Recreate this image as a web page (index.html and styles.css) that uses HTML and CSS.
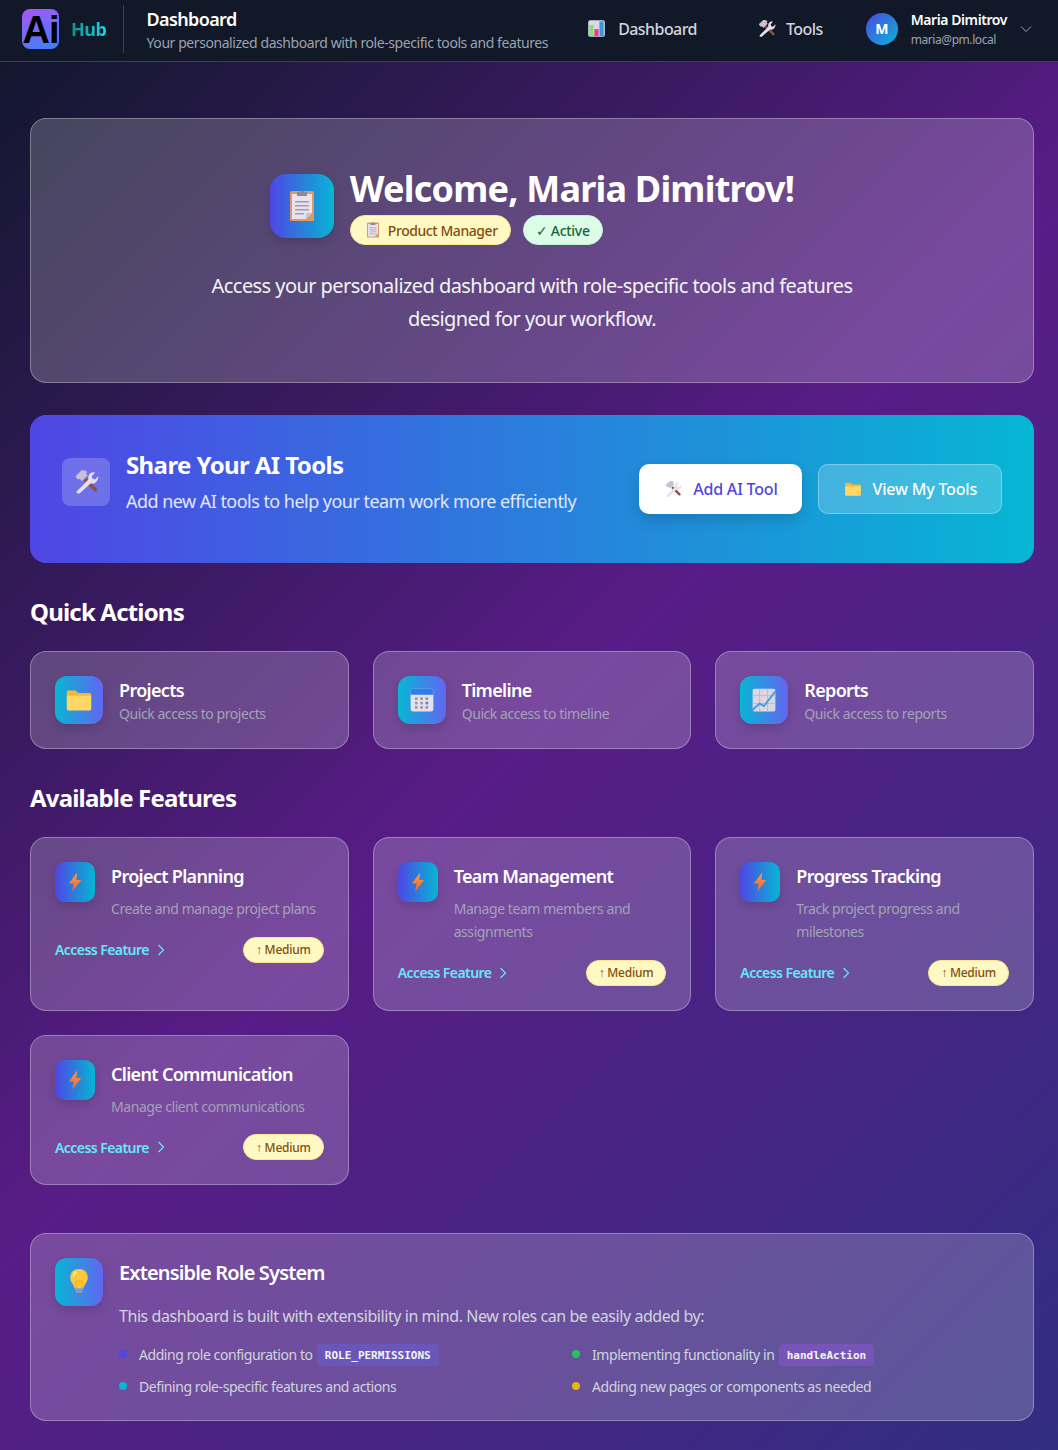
FILE: index.html
```html
<!DOCTYPE html>
<html lang="en">
<head>
  <meta charset="UTF-8" />
  <title>Dashboard</title>
  <link rel="stylesheet" href="styles.css">
</head>
<body>
  <svg class="defs" aria-hidden="true">
    <defs>
      <linearGradient id="bolt-g" x1="0" y1="0" x2="0" y2="1"><stop offset="0" stop-color="#f9a03f"/><stop offset="1" stop-color="#f2603c"/></linearGradient>
    </defs>
    <symbol id="i-tools" viewBox="0 0 32 32">
      <path d="M13 14l3-3 13 13c1 1 1 2 0 3s-2 1-3 0z" fill="#8d4f4a"/>
      <path d="M3 9l7-7c3-1 6 0 8 2l-2 1 2 3-7 7-3-3-2 1z" fill="#c9c0d3"/>
      <path d="M5 27l14-14c-1-4 1-8 5-9 1 0 2 0 3 .5L23 9l1 3 3 1 4-4c.5 4-2 8-6 9-1 0-2 0-3-.5L8 30c-2 1-5-1-3-3z" fill="#e6e0ec"/>
    </symbol>
    <symbol id="i-clip" viewBox="0 0 32 32">
      <rect x="4" y="1" width="24" height="30" rx="1.500" fill="#e09a5c"/>
      <path d="M6 4h20v19l-6 6H6z" fill="#e8e2ef"/>
      <path d="M20 29l6-6h-6z" fill="#c9c0d3"/>
      <path d="M9 11h14v1.400H9zM9 15h14v1.400H9zM9 19h14v1.400H9zM9 23h9v1.400H9z" fill="#a49cae"/>
      <path d="M11 2h3c0-2 4-2 4 0h3v4H11z" fill="#8f8896"/>
    </symbol>
    <symbol id="i-folder" viewBox="0 0 32 32">
      <path d="M2 7c0-1 1-2 2-2h8l3 3h13c1 0 2 1 2 2v4H2z" fill="#f7b733"/>
      <path d="M2 11h28v15c0 1-1 2-2 2H4c-1 0-2-1-2-2z" fill="#ffd766"/>
    </symbol>
    <symbol id="i-cal" viewBox="0 0 32 32">
      <rect x="3" y="3" width="26" height="26" rx="3" fill="#e6e0ec"/>
      <path d="M3 10V6c0-2 1-3 3-3h20c2 0 3 1 3 3v4z" fill="#2f7bf0"/>
      <g fill="#9a93a4">
        <rect x="8" y="13" width="3" height="3"/><rect x="14" y="13" width="3" height="3"/>
        <rect x="8" y="18" width="3" height="3"/><rect x="14" y="18" width="3" height="3"/><rect x="20" y="23" width="3" height="3"/>
        <rect x="8" y="23" width="3" height="3"/><rect x="14" y="23" width="3" height="3"/><rect x="20" y="13" width="3" height="3"/>
      </g>
      <rect x="20" y="18" width="3" height="3" fill="#2f8cf0"/>
    </symbol>
    <symbol id="i-chart" viewBox="0 0 32 32">
      <rect x="3" y="3" width="26" height="26" rx="2" fill="#ddd6e6"/>
      <path d="M11 3v26M20 3v26M3 11h26M3 20h26" stroke="#bdb5c8" fill="none"/>
      <path d="M2 28l9-8 5 3 13-17" stroke="#3d9be0" stroke-width="2" fill="none"/>
    </symbol>
    <symbol id="i-bars" viewBox="0 0 32 32">
      <rect x="2" y="2" width="28" height="28" rx="3" fill="#ddd6e6"/>
      <rect x="4" y="10" width="7" height="19" fill="#86e07a"/>
      <rect x="12.500" y="17" width="7" height="12" fill="#ee3c7c"/>
      <rect x="21" y="4" width="7" height="25" fill="#2f9ae0"/>
    </symbol>
    <symbol id="i-bolt" viewBox="0 0 32 32">
      <path d="M19 2L7 18h7l-2 12 13-17h-7z" fill="url(#bolt-g)"/>
    </symbol>
    <symbol id="i-bulb" viewBox="0 0 32 32">
      <path d="M16 1c6 0 10 4 10 10 0 5-4 7-5 12H11c-1-5-5-7-5-12C6 5 10 1 16 1z" fill="#fdc83a"/>
      <path d="M12 4c-2 1-3 4-3 6 1 1 2-3 5-5z" fill="#ffe89a"/>
      <path d="M13 23l-1-8h8l-1 8" fill="none" stroke="#f29e1f"/>
      <path d="M11 23h10v2H11zM12 26h8v2h-8z" fill="#a9a1b4"/>
      <path d="M13 29h6l-1 2h-4z" fill="#7f7789"/>
    </symbol>
  </svg>

  <header class="topbar">
    <div class="brand">
      <div class="logo">Ai</div>
      <span class="logo-hub">Hub</span>
      <div class="topbar-title">
        <h1>Dashboard</h1>
        <p>Your personalized dashboard with role-specific tools and features</p>
      </div>
    </div>
    <div class="topbar-right">
      <a class="nav-link nav-dash"><svg class="nav-icon"><use href="#i-bars"/></svg>Dashboard</a>
      <a class="nav-link nav-tools"><svg class="nav-icon"><use href="#i-tools"/></svg>Tools</a>
      <div class="user">
        <div class="avatar">M</div>
        <div class="user-info">
          <div class="user-name">Maria Dimitrov</div>
          <div class="user-mail">maria@pm.local</div>
        </div>
        <svg class="user-chevron" viewBox="0 0 12 12"><path d="M1 3.500l5 5 5-5" fill="none" stroke="currentColor" stroke-width="1"/></svg>
      </div>
    </div>
  </header>

  <main class="page">
    <section class="glass hero">
      <div class="hero-top">
        <div class="icon-box hero-icon"><svg><use href="#i-clip"/></svg></div>
        <div class="hero-head">
          <h2>Welcome, Maria Dimitrov!</h2>
          <div class="hero-badges">
            <span class="pill pill-yellow"><svg><use href="#i-clip"/></svg>Product Manager</span>
            <span class="pill pill-green">✓ Active</span>
          </div>
        </div>
      </div>
      <p class="hero-text">Access your personalized dashboard with role-specific tools and features designed for your workflow.</p>
    </section>

    <section class="share">
      <div class="share-left">
        <div class="share-icon"><svg><use href="#i-tools"/></svg></div>
        <div>
          <h3>Share Your AI Tools</h3>
          <p>Add new AI tools to help your team work more efficiently</p>
        </div>
      </div>
      <div class="share-btns">
        <a class="btn btn-white"><svg><use href="#i-tools"/></svg>Add AI Tool</a>
        <a class="btn btn-glass"><svg><use href="#i-folder"/></svg>View My Tools</a>
      </div>
    </section>

    <h2 class="section-title">Quick Actions</h2>
    <div class="grid">
      <div class="glass quick">
        <div class="icon-box alt"><svg><use href="#i-folder"/></svg></div>
        <div><h4>Projects</h4><p>Quick access to projects</p></div>
      </div>
      <div class="glass quick">
        <div class="icon-box alt"><svg><use href="#i-cal"/></svg></div>
        <div><h4>Timeline</h4><p>Quick access to timeline</p></div>
      </div>
      <div class="glass quick">
        <div class="icon-box alt"><svg><use href="#i-chart"/></svg></div>
        <div><h4>Reports</h4><p>Quick access to reports</p></div>
      </div>
    </div>

    <h2 class="section-title">Available Features</h2>
    <div class="grid">
      <div class="glass feature">
        <div class="feature-top">
          <div class="icon-box small"><svg><use href="#i-bolt"/></svg></div>
          <div><h4>Project Planning</h4><p>Create and manage project plans</p></div>
        </div>
        <div class="feature-foot">
          <a class="access">Access Feature <svg viewBox="0 0 12 12"><path d="M3.500 1l5 5-5 5" fill="none" stroke="currentColor" stroke-width="1.200"/></svg></a>
          <span class="pill pill-yellow pill-small">↑ Medium</span>
        </div>
      </div>
      <div class="glass feature">
        <div class="feature-top">
          <div class="icon-box small"><svg><use href="#i-bolt"/></svg></div>
          <div><h4>Team Management</h4><p>Manage team members and assignments</p></div>
        </div>
        <div class="feature-foot">
          <a class="access">Access Feature <svg viewBox="0 0 12 12"><path d="M3.500 1l5 5-5 5" fill="none" stroke="currentColor" stroke-width="1.200"/></svg></a>
          <span class="pill pill-yellow pill-small">↑ Medium</span>
        </div>
      </div>
      <div class="glass feature">
        <div class="feature-top">
          <div class="icon-box small"><svg><use href="#i-bolt"/></svg></div>
          <div><h4>Progress Tracking</h4><p>Track project progress and milestones</p></div>
        </div>
        <div class="feature-foot">
          <a class="access">Access Feature <svg viewBox="0 0 12 12"><path d="M3.500 1l5 5-5 5" fill="none" stroke="currentColor" stroke-width="1.200"/></svg></a>
          <span class="pill pill-yellow pill-small">↑ Medium</span>
        </div>
      </div>
      <div class="glass feature">
        <div class="feature-top">
          <div class="icon-box small"><svg><use href="#i-bolt"/></svg></div>
          <div><h4>Client Communication</h4><p>Manage client communications</p></div>
        </div>
        <div class="feature-foot">
          <a class="access">Access Feature <svg viewBox="0 0 12 12"><path d="M3.500 1l5 5-5 5" fill="none" stroke="currentColor" stroke-width="1.200"/></svg></a>
          <span class="pill pill-yellow pill-small">↑ Medium</span>
        </div>
      </div>
    </div>

    <section class="glass info">
      <div class="icon-box alt"><svg><use href="#i-bulb"/></svg></div>
      <div class="info-body">
        <h3>Extensible Role System</h3>
        <p>This dashboard is built with extensibility in mind. New roles can be easily added by:</p>
        <ul class="info-list">
          <li><span class="dot dot-indigo"></span>Adding role configuration to <code class="code-a">ROLE_PERMISSIONS</code></li>
          <li><span class="dot dot-green"></span>Implementing functionality in <code class="code-b">handleAction</code></li>
          <li><span class="dot dot-cyan"></span>Defining role-specific features and actions</li>
          <li><span class="dot dot-amber"></span>Adding new pages or components as needed</li>
        </ul>
      </div>
    </section>
  </main>
</body>
</html>
```

FILE: styles.css
```css
* {
  box-sizing: border-box;
}

body {
  margin: 0;
  min-height: 1450px;
  font-family: "Noto Sans", Roboto, sans-serif;
  letter-spacing: -0.027em;
  color: #fff;
  background: linear-gradient(135deg, #0f172a 0%, #581c87 50%, #312e81 100%);
}

h1, h2, h3, h4, p, ul {
  margin: 0;
  padding: 0;
}

.defs {
  position: absolute;
  width: 0;
  height: 0;
}

/* top bar */
.topbar {
  height: 62px;
  display: flex;
  justify-content: space-between;
  align-items: center;
  padding: 0 26px 4px 22px;
  background: #111827;
  border-bottom: 1px solid #374151;
}

.brand {
  display: flex;
  align-items: center;
}

.logo {
  width: 37px;
  height: 40px;
  border-radius: 8px;
  background: linear-gradient(160deg, #a855f7, #3b82f6);
  color: #000;
  font: 700 38px/42px "Liberation Sans", sans-serif;
  letter-spacing: -1px;
  text-align: center;
}

.logo-hub {
  margin-left: 12px;
  font-size: 18px;
  font-weight: 700;
  background: linear-gradient(90deg, #0d9488, #22d3ee);
  -webkit-background-clip: text;
  background-clip: text;
  color: transparent;
}

.topbar-title {
  margin-left: 16px;
  padding: 1px 0 0 23px;
  border-left: 1px solid #374151;
  height: 48px;
}

.topbar-title h1 {
  font-size: 18px;
  font-weight: 600;
  line-height: 27px;
  letter-spacing: -0.035em;
}

.topbar-title p {
  font-size: 14px;
  line-height: 20px;
  color: #9ca3af;
}

.topbar-right {
  display: flex;
  align-items: center;
}

.nav-link {
  display: flex;
  align-items: center;
  gap: 12px;
  font-size: 16px;
  font-weight: 500;
  letter-spacing: -0.035em;
  color: #d1d5db;
}

.nav-dash {
  margin-right: 60px;
}

.nav-tools {
  margin-right: 43px;
  gap: 10px;
}

.nav-icon {
  width: 19px;
  height: 19px;
}

.user {
  display: flex;
  align-items: center;
}

.avatar {
  width: 32px;
  height: 32px;
  border-radius: 50%;
  background: linear-gradient(135deg, #4f46e5, #06b6d4);
  text-align: center;
  font-size: 14px;
  font-weight: 700;
  line-height: 32px;
}

.user-info {
  margin: 0 13px;
  padding-top: 1px;
}

.user-name {
  font-size: 14px;
  font-weight: 600;
  line-height: 20px;
  letter-spacing: -0.03em;
}

.user-mail {
  margin-top: 2px;
  font-size: 12px;
  line-height: 16px;
  color: #9ca3af;
}

.user-chevron {
  width: 12px;
  height: 12px;
  color: #9ca3af;
}

/* page */
.page {
  padding: 56px 24px 29px 30px;
}

.glass {
  background: rgba(255, 255, 255, 0.2);
  border: 1px solid rgba(255, 255, 255, 0.3);
  border-radius: 16px;
}

.icon-box {
  flex: none;
  width: 48px;
  height: 48px;
  border-radius: 12px;
  display: flex;
  align-items: center;
  justify-content: center;
  background: linear-gradient(90deg, #4f46e5, #06b6d4);
  box-shadow: 0 4px 10px rgba(0, 0, 0, 0.15);
}

.icon-box svg {
  width: 28px;
  height: 28px;
}

.icon-box.alt {
  background: linear-gradient(90deg, #06b6d4, #6366f1);
}

.icon-box.small {
  width: 40px;
  height: 40px;
  border-radius: 10px;
}

.icon-box.small svg {
  width: 22px;
  height: 22px;
}

/* hero */
.hero {
  height: 265px;
  padding: 48px 47px;
  text-align: center;
}

.hero-top {
  display: flex;
  justify-content: center;
  align-items: center;
  gap: 16px;
  text-align: left;
}

.hero-icon {
  width: 64px;
  height: 64px;
  border-radius: 16px;
}

.hero-icon svg {
  width: 32px;
  height: 32px;
}

.hero-head h2 {
  font-size: 36px;
  font-weight: 700;
  line-height: 44px;
  letter-spacing: -0.022em;
}

.hero-badges {
  display: flex;
  gap: 12px;
  margin-top: 4px;
}

.pill {
  display: inline-flex;
  align-items: center;
  height: 30px;
  padding: 0 12px;
  border-radius: 15px;
  font-size: 14px;
  font-weight: 500;
}

.pill svg {
  width: 16px;
  height: 16px;
  margin: 0 7px 0 2px;
}

.pill-yellow {
  background: #fef9c3;
  border: 1px solid #fde68a;
  color: #854d0e;
}

.pill-green {
  background: #dcfce7;
  border: 1px solid #bbf7d0;
  color: #166534;
  letter-spacing: -0.02em;
}

.pill-small {
  height: 26px;
  border-radius: 13px;
  font-size: 12px;
  letter-spacing: -0.02em;
}

.hero-text {
  max-width: 672px;
  margin: 24px auto 0;
  font-size: 20px;
  line-height: 33px;
  letter-spacing: -0.028em;
  color: #f3f4f6;
}

/* share banner */
.share {
  height: 148px;
  margin-top: 32px;
  padding: 0 32px;
  display: flex;
  justify-content: space-between;
  align-items: center;
  border-radius: 16px;
  background: linear-gradient(90deg, #4f46e5, #06b6d4);
}

.share-left {
  display: flex;
  align-items: center;
  gap: 16px;
  margin-bottom: 14px;
}

.share-icon {
  width: 48px;
  height: 48px;
  border-radius: 8px;
  background: rgba(255, 255, 255, 0.2);
  display: flex;
  align-items: center;
  justify-content: center;
}

.share-icon svg {
  width: 26px;
  height: 26px;
}

.share h3 {
  font-size: 24px;
  font-weight: 700;
  line-height: 32px;
  letter-spacing: -0.025em;
}

.share p {
  margin-top: 6px;
  font-size: 18px;
  line-height: 28px;
  letter-spacing: -0.03em;
  color: #e0e7ff;
}

.share-btns {
  display: flex;
  gap: 16px;
}

.btn {
  height: 50px;
  padding: 0 24px 0 25px;
  display: flex;
  align-items: center;
  gap: 11px;
  border-radius: 10px;
  font-size: 16px;
  font-weight: 500;
  letter-spacing: -0.012em;
}

.btn svg {
  width: 18px;
  height: 18px;
}

.btn-white {
  background: #fff;
  color: #4f46e5;
  box-shadow: 0 6px 14px rgba(0, 0, 0, 0.15);
}

.btn-glass {
  background: rgba(255, 255, 255, 0.2);
  border: 1px solid rgba(255, 255, 255, 0.3);
}

/* sections */
.section-title {
  margin: 34px 0 24px;
  font-size: 24px;
  font-weight: 700;
  line-height: 30px;
  letter-spacing: -0.034em;
}

.grid {
  display: grid;
  grid-template-columns: repeat(3, 1fr);
  gap: 24px;
}

.quick {
  height: 98px;
  padding: 0 24px;
  display: flex;
  align-items: center;
  gap: 16px;
}

h4 {
  font-size: 18px;
  font-weight: 600;
  line-height: 28px;
  letter-spacing: -0.038em;
}

.quick p,
.feature p {
  font-size: 14px;
  color: #a3a3b5;
}

.quick p {
  line-height: 20px;
}

.feature {
  padding: 24px;
}

.feature-top {
  display: flex;
  gap: 16px;
}

.feature p {
  margin-top: 8px;
  line-height: 22.750px;
}

.feature-foot {
  margin-top: 16px;
  display: flex;
  justify-content: space-between;
  align-items: center;
}

.access {
  display: flex;
  align-items: center;
  gap: 6px;
  font-size: 14px;
  font-weight: 600;
  letter-spacing: -0.04em;
  color: #67e8f9;
}

.access svg {
  width: 12px;
  height: 12px;
}

/* info */
.info {
  margin-top: 48px;
  height: 188px;
  padding: 24px;
  display: flex;
  gap: 16px;
}

.info-body {
  flex: 1;
}

.info h3 {
  font-size: 20px;
  font-weight: 600;
  line-height: 30px;
  letter-spacing: -0.042em;
}

.info-body p {
  margin-top: 16px;
  font-size: 16px;
  line-height: 24px;
  color: #d1d5db;
}

.info-list {
  margin-top: 15px;
  list-style: none;
  display: grid;
  grid-template-columns: 453px 1fr;
  row-gap: 10px;
  font-size: 14px;
  color: #d1d5db;
}

.info-list li {
  display: flex;
  align-items: center;
  height: 22px;
  white-space: pre;
}

.dot {
  width: 8px;
  height: 8px;
  border-radius: 50%;
  margin-right: 12px;
}

.dot-indigo { background: #4f46e5; }
.dot-green { background: #22c55e; }
.dot-cyan { background: #06b6d4; }
.dot-amber { background: #eab308; }

code {
  margin: 1px 0 0 1px;
  height: 22px;
  padding: 0 8px;
  border-radius: 4px;
  font: 700 11px/23px "DejaVu Sans Mono", monospace;
  letter-spacing: 0;
  color: #f3f4f6;
}

.code-a { background: rgba(99, 102, 241, 0.35); }
.code-b { background: rgba(168, 85, 247, 0.3); }
```
